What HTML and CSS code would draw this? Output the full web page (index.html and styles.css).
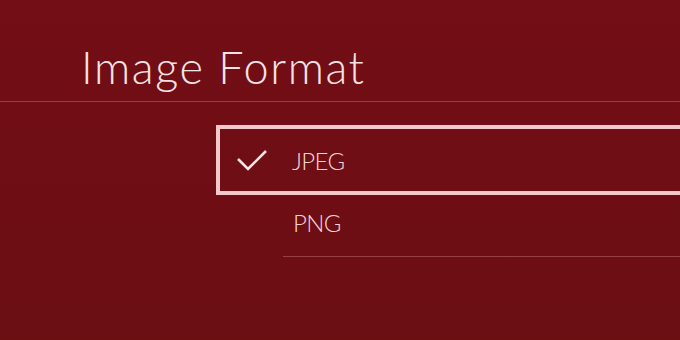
FILE: index.html
```html
<!DOCTYPE html>
<html lang="en">
<head>
<meta charset="UTF-8">
<meta name="viewport" content="width=device-width, initial-scale=1.0">
<title>Image Format</title>
<link rel="stylesheet" href="styles.css">
</head>
<body>
    <div class="header">
        <h1 class="title">Image Format</h1>
    </div>
    <div class="options">
        <div class="option selected">
            <svg class="check" width="32" height="24" viewBox="0 0 32 24">
                <polyline points="2,10 12,20 30,2" fill="none" stroke="#f7e4e4" stroke-width="2.6"/>
            </svg>
            <span class="label">JPEG</span>
        </div>
        <div class="option">
            <span class="label">PNG</span>
        </div>
    </div>
</body>
</html>
```

FILE: styles.css
```css
body{
  margin: 0;
  height: 340px;
  overflow: hidden;
  background: linear-gradient(#730d16, #6b0f13);
  font-family: "Lato", "Open Sans", sans-serif;
  color: #f6e3e3;
}

.header{
  height: 102px;
  border-bottom: 1px solid rgba(255, 200, 200, 0.28);
  padding-left: 81px;
  box-sizing: border-box;
}

.title{
  margin: 0;
  padding-top: 41px;
  font-size: 45px;
  font-weight: 300;
  line-height: 52px;
  letter-spacing: 1.6px;
}

.options{
  margin-top: 23px;
  margin-left: 216px;
}

.option{
  display: flex;
  align-items: center;
  height: 62px;
  padding-bottom: 6px;
  box-sizing: border-box;
  margin-left: 67px;
  border-bottom: 1px solid rgba(255, 200, 200, 0.28);
}

.option .label{
  font-size: 24px;
  font-weight: 300;
  letter-spacing: -0.6px;
  margin-left: 10px;
  color: #f4d6d6;
}

.selected{
  margin-left: 0;
  width: 480px;
  height: 70px;
  padding-bottom: 0;
  border: 4px solid #f3c9cc;
}

.selected .check{
  margin-left: 16px;
  margin-top: 2px;
}

.selected .label{
  margin-left: 24px;
}
```
